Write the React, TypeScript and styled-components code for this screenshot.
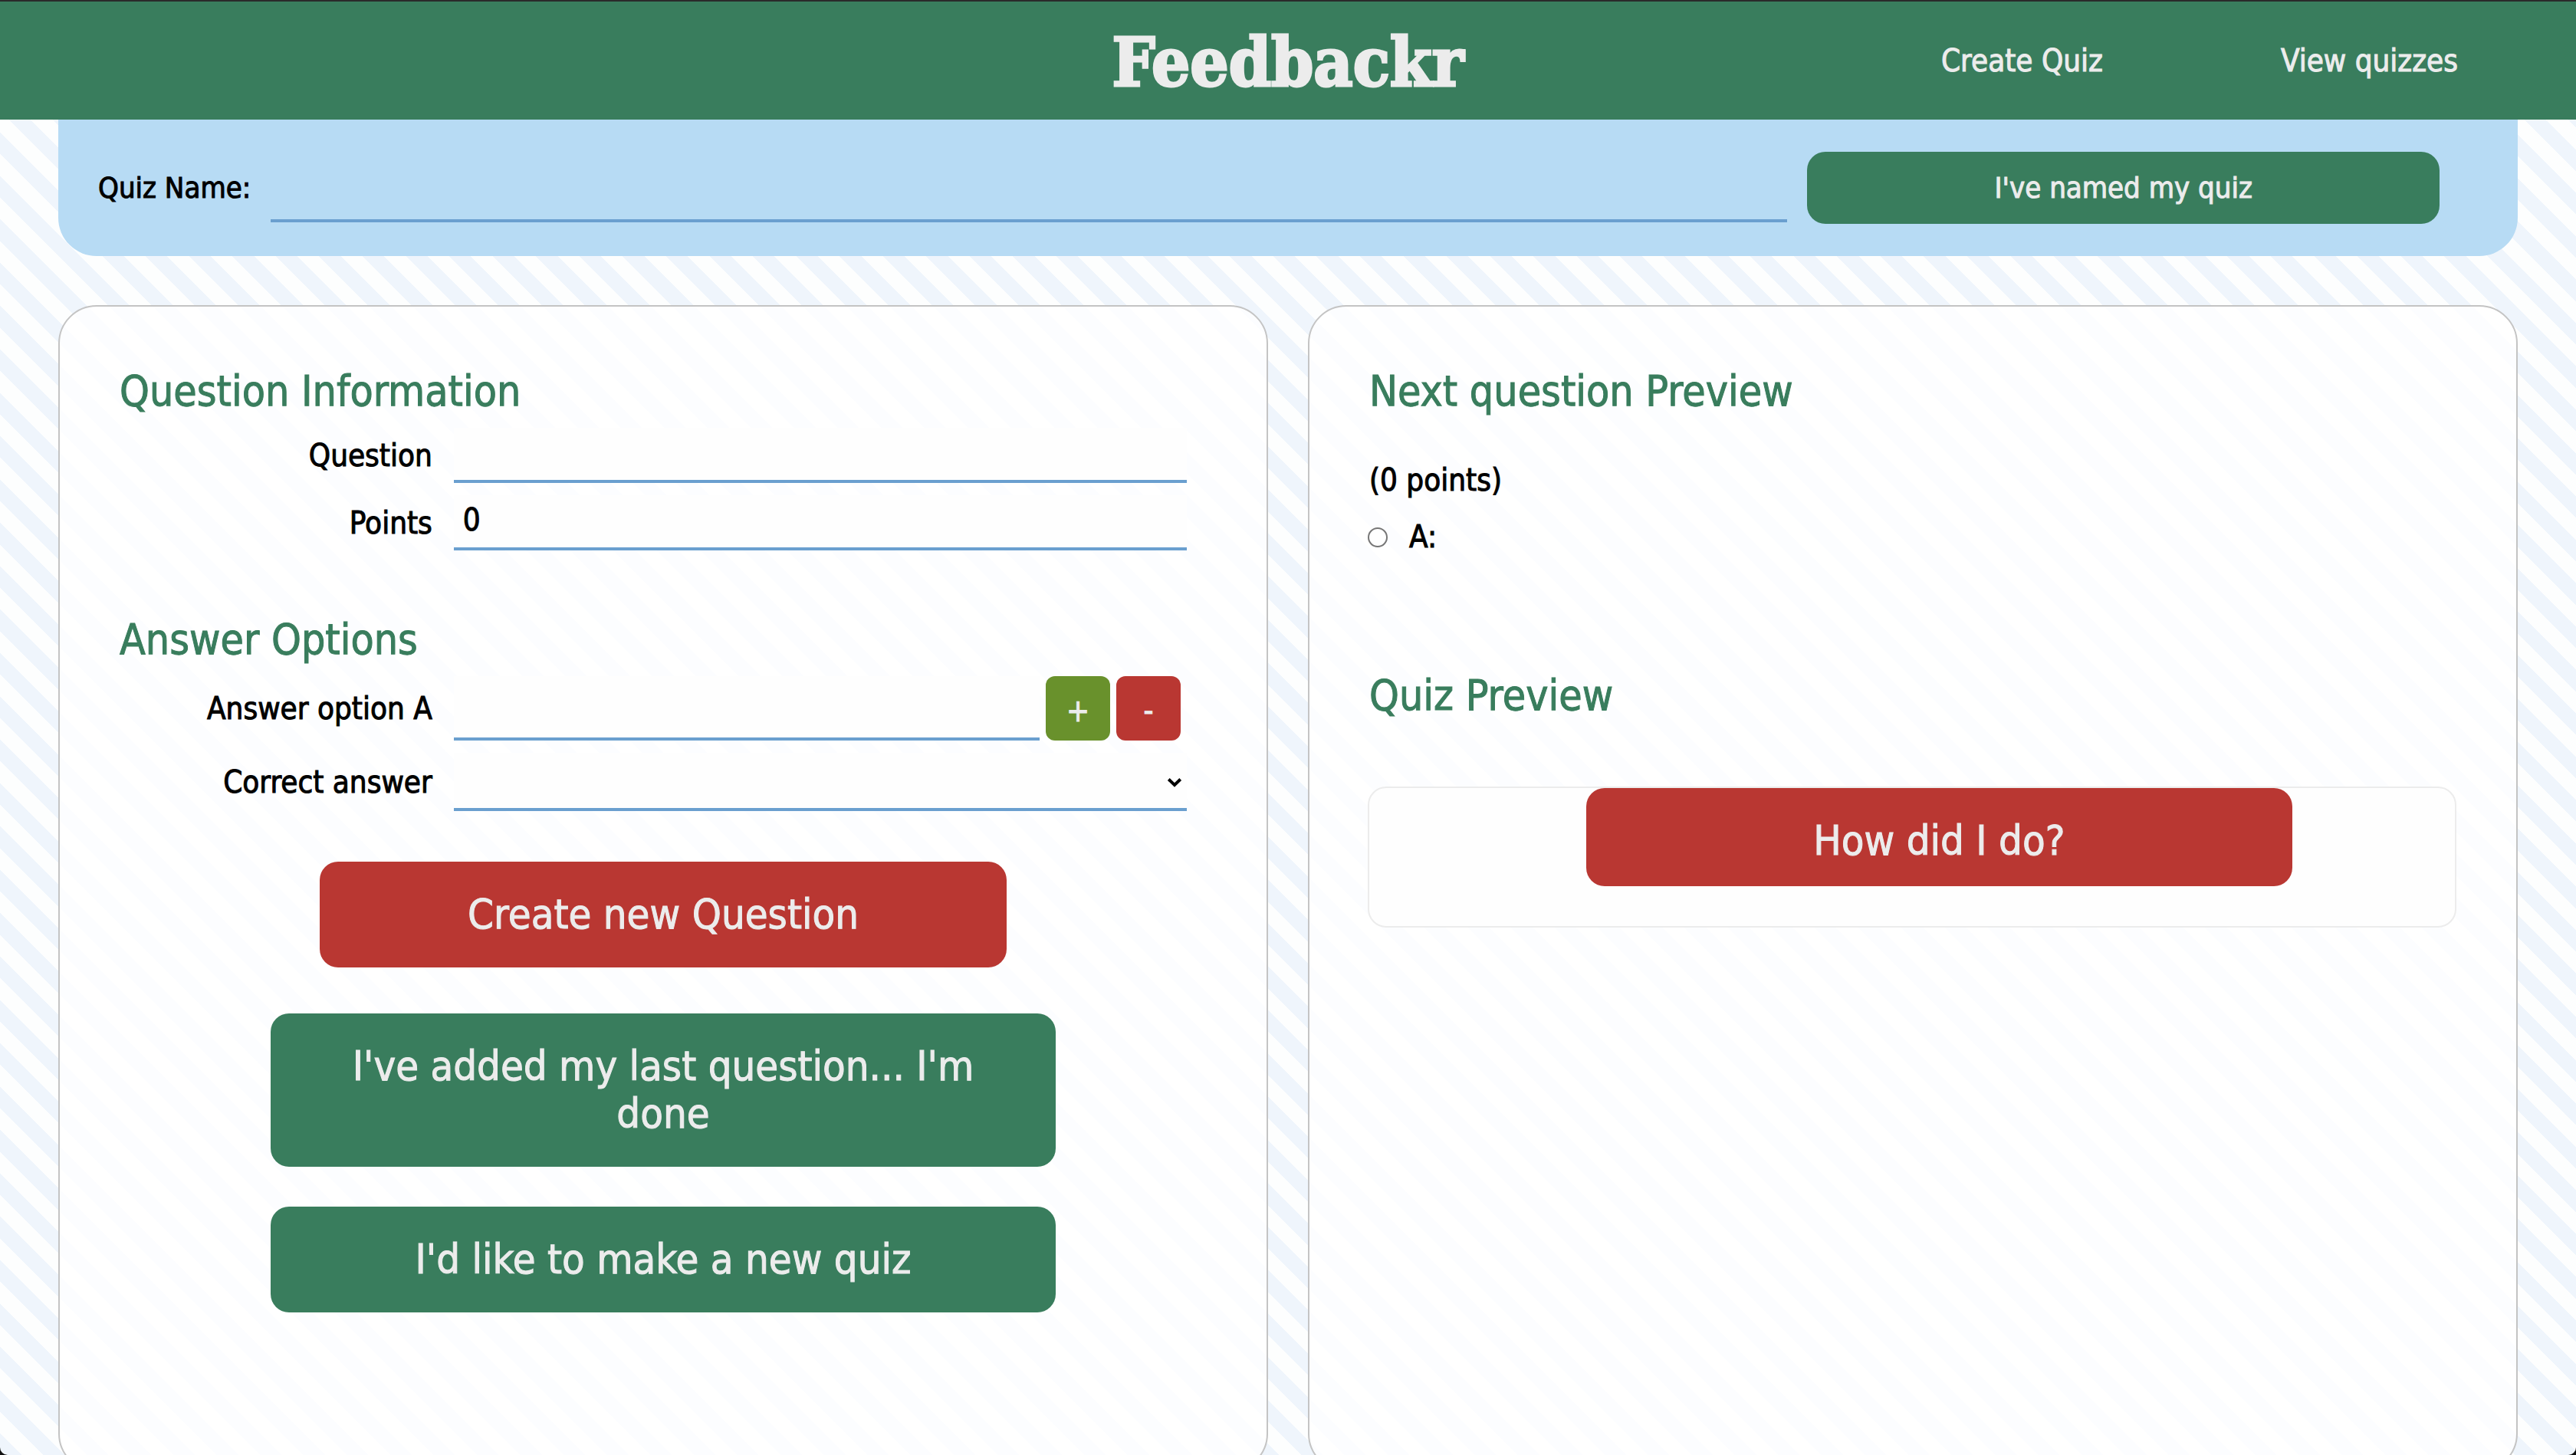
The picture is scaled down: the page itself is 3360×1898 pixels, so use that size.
import React, { useState } from "react";
import styled, { createGlobalStyle } from "styled-components";

const color = {
  green: "#397d5d",
  red: "#b93732",
  olive: "#69912c",
  sky: "#b7dbf4",
  line: "#6a9fcf",
  light: "#ececec",
};

const GlobalStyle = createGlobalStyle`
  *, *::before, *::after { box-sizing: border-box; }
  html { scrollbar-width: none; }
  body {
    margin: 0;
    font-family: "DejaVu Sans Condensed", "DejaVu Sans", sans-serif;
    font-size: 40px;
    line-height: 48px;
    color: #000;
    -webkit-text-stroke: 1px currentColor;
    background: repeating-linear-gradient(
      45deg, #eff5fc 0, #eff5fc 20px, #fdfefe 20px, #fdfefe 40px
    ) fixed;
  }
  button, input, select {
    font: inherit;
    color: inherit;
    -webkit-text-stroke: 1px currentColor;
  }
`;

/* Rounded lower corners of the window, over everything else */
const WindowFrame = styled.div`
  position: fixed;
  inset: 0;
  border-radius: 0 0 10px 10px;
  box-shadow: 0 0 0 10px #111;
  pointer-events: none;
`;

const Header = styled.header`
  display: grid;
  grid-template-columns: 1fr auto 1fr;
  align-items: center;
  height: 156px;
  border-top: 2px solid #2a2a2a;
  background: ${color.green};
  color: ${color.light};
`;

const Logo = styled.h1`
  grid-column: 2;
  margin: 0;
  padding-top: 4px;
  font: 700 88px/100px "DejaVu Serif Condensed", "DejaVu Serif", serif;
  -webkit-text-stroke: 3px ${color.light};
`;

const Nav = styled.nav`
  display: flex;
  justify-content: flex-end;
  gap: 232px;
  padding-right: 154px;
`;

const NavLink = styled.a`
  color: inherit;
  text-decoration: none;
  white-space: nowrap;
`;

const NameBar = styled.form`
  display: flex;
  align-items: center;
  gap: 26px;
  height: 178px;
  margin: 0 76px 64px;
  padding: 0 102px 0 52px;
  border-radius: 0 0 50px 50px;
  background: ${color.sky};
  font-size: 38px;
`;

const Field = styled.input<{ $height: number; $clear?: boolean }>`
  flex: 1;
  min-width: 0;
  width: 100%;
  height: ${(p) => p.$height}px;
  padding: 0 12px 4px;
  border: 0;
  border-bottom: 4px solid ${color.line};
  border-radius: 0;
  outline: 0;
  background: ${(p) => (p.$clear ? "transparent" : "#fefefe")};
`;

const NameButton = styled.button`
  flex: 0 0 27%;
  height: 94px;
  border: 0;
  border-radius: 24px;
  background: ${color.green};
  color: ${color.light};
`;

const Columns = styled.main`
  display: grid;
  grid-template-columns: 1fr 1fr;
  gap: 52px;
  padding: 0 76px;
`;

const Panel = styled.section`
  padding: 76px 76px 206px;
  border: 2px solid #c4c4c4;
  border-radius: 50px;
  background: rgba(255, 255, 255, 0.8);
`;

const Heading = styled.h2`
  margin: 0 0 14px;
  padding-left: 2px;
  font-size: 55px;
  font-weight: 400;
  line-height: 68px;
  color: ${color.green};
`;

const Rows = styled.div<{ $after: number }>`
  display: grid;
  gap: 16px;
  margin-bottom: ${(p) => p.$after}px;
`;

const Row = styled.div`
  display: grid;
  grid-template-columns: 3fr 7fr;
  align-items: center;
  gap: 28px;
  padding-right: 28px;
`;

const RowLabel = styled.label`
  text-align: right;
`;

const AnswerControls = styled.div`
  display: flex;
  gap: 8px;
  padding-right: 8px;
`;

const SquareButton = styled.button<{ $bg: string }>`
  width: 84px;
  height: 84px;
  padding: 6px 0 0;
  border: 0;
  border-radius: 12px;
  background: ${(p) => p.$bg};
  color: ${color.light};
`;

const SelectBox = styled.div`
  position: relative;
`;

const Select = styled.select`
  display: block;
  width: 100%;
  height: 76px;
  padding: 0 12px;
  border: 0;
  border-bottom: 4px solid ${color.line};
  border-radius: 0;
  appearance: none;
  background: #fefefe;
`;

const Chevron = styled.svg`
  position: absolute;
  right: 6px;
  top: 32px;
  width: 20px;
  height: 13px;
  pointer-events: none;
`;

const Actions = styled.div`
  display: flex;
  flex-direction: column;
  align-items: center;
`;

const BigButton = styled.button<{ $bg: string; $width: string; $after: number }>`
  width: ${(p) => p.$width};
  margin-bottom: ${(p) => p.$after}px;
  padding: 38px 80px;
  border: 0;
  border-radius: 24px;
  background: ${(p) => p.$bg};
  color: ${color.light};
  font-size: 54px;
  line-height: 62px;
`;

const Preview = styled.div`
  display: grid;
  gap: 26px;
  padding: 44px 0 149px;
`;

const Prompt = styled.div`
  padding-left: 2px;
`;

const Choice = styled.label`
  display: flex;
  align-items: center;
  gap: 28px;
`;

const Radio = styled.input`
  appearance: none;
  width: 26px;
  height: 26px;
  margin: 2px 0 0;
  border: 2px solid #767676;
  border-radius: 50%;
  background: #fff;
`;

const ResultBox = styled.div`
  margin: 85px 2px 0 0;
  border: 2px solid #ececec;
  border-radius: 24px;
  background: #fefefe;
`;

const ResultButton = styled(BigButton)`
  display: block;
  margin-left: 20%;
  padding: 38px 80px 28px;
`;

export default function App() {
  const [name, setName] = useState("");
  const [question, setQuestion] = useState("");
  const [points, setPoints] = useState("0");
  const [answer, setAnswer] = useState("");

  return (
    <>
      <GlobalStyle />
      <Header>
        <Logo>Feedbackr</Logo>
        <Nav>
          <NavLink href="#create">Create Quiz</NavLink>
          <NavLink href="#quizzes">View quizzes</NavLink>
        </Nav>
      </Header>

      <NameBar onSubmit={(e) => e.preventDefault()}>
        <label htmlFor="quiz-name">Quiz Name:</label>
        <Field id="quiz-name" $height={90} $clear value={name} onChange={(e) => setName(e.target.value)} />
        <NameButton type="submit">I've named my quiz</NameButton>
      </NameBar>

      <Columns>
        <Panel>
          <Heading>Question Information</Heading>
          <Rows $after={82}>
            <Row>
              <RowLabel htmlFor="question">Question</RowLabel>
              <Field id="question" $height={72} value={question} onChange={(e) => setQuestion(e.target.value)} />
            </Row>
            <Row>
              <RowLabel htmlFor="points">Points</RowLabel>
              <Field
                id="points"
                inputMode="numeric"
                $height={72}
                value={points}
                onChange={(e) => setPoints(e.target.value)}
              />
            </Row>
          </Rows>

          <Heading>Answer Options</Heading>
          <Rows $after={66}>
            <Row>
              <RowLabel htmlFor="answer-a">Answer option A</RowLabel>
              <AnswerControls>
                <Field id="answer-a" $height={84} value={answer} onChange={(e) => setAnswer(e.target.value)} />
                <SquareButton type="button" $bg={color.olive}>+</SquareButton>
                <SquareButton type="button" $bg={color.red}>-</SquareButton>
              </AnswerControls>
            </Row>
            <Row>
              <RowLabel htmlFor="correct">Correct answer</RowLabel>
              <SelectBox>
                <Select id="correct" defaultValue="">
                  <option value="" />
                </Select>
                <Chevron viewBox="0 0 20 13" aria-hidden="true">
                  <path d="M2.3 2.5 10 10l7.700-7.500" fill="none" stroke="#000" strokeWidth="4" />
                </Chevron>
              </SelectBox>
            </Row>
          </Rows>

          <Actions>
            <BigButton type="button" $bg={color.red} $width="63%" $after={60}>
              Create new Question
            </BigButton>
            <BigButton type="button" $bg={color.green} $width="72%" $after={52}>
              I've added my last question... I'm done
            </BigButton>
            <BigButton type="button" $bg={color.green} $width="72%" $after={0}>
              I'd like to make a new quiz
            </BigButton>
          </Actions>
        </Panel>

        <Panel>
          <Heading>Next question Preview</Heading>
          <Preview>
            <Prompt>{question} ({points} points)</Prompt>
            <Choice>
              <Radio type="radio" name="preview" />
              <span>A: {answer}</span>
            </Choice>
          </Preview>

          <Heading>Quiz Preview</Heading>
          <ResultBox>
            <ResultButton type="button" $bg={color.red} $width="65%" $after={52}>
              How did I do?
            </ResultButton>
          </ResultBox>
        </Panel>
      </Columns>
      <WindowFrame />
    </>
  );
}
